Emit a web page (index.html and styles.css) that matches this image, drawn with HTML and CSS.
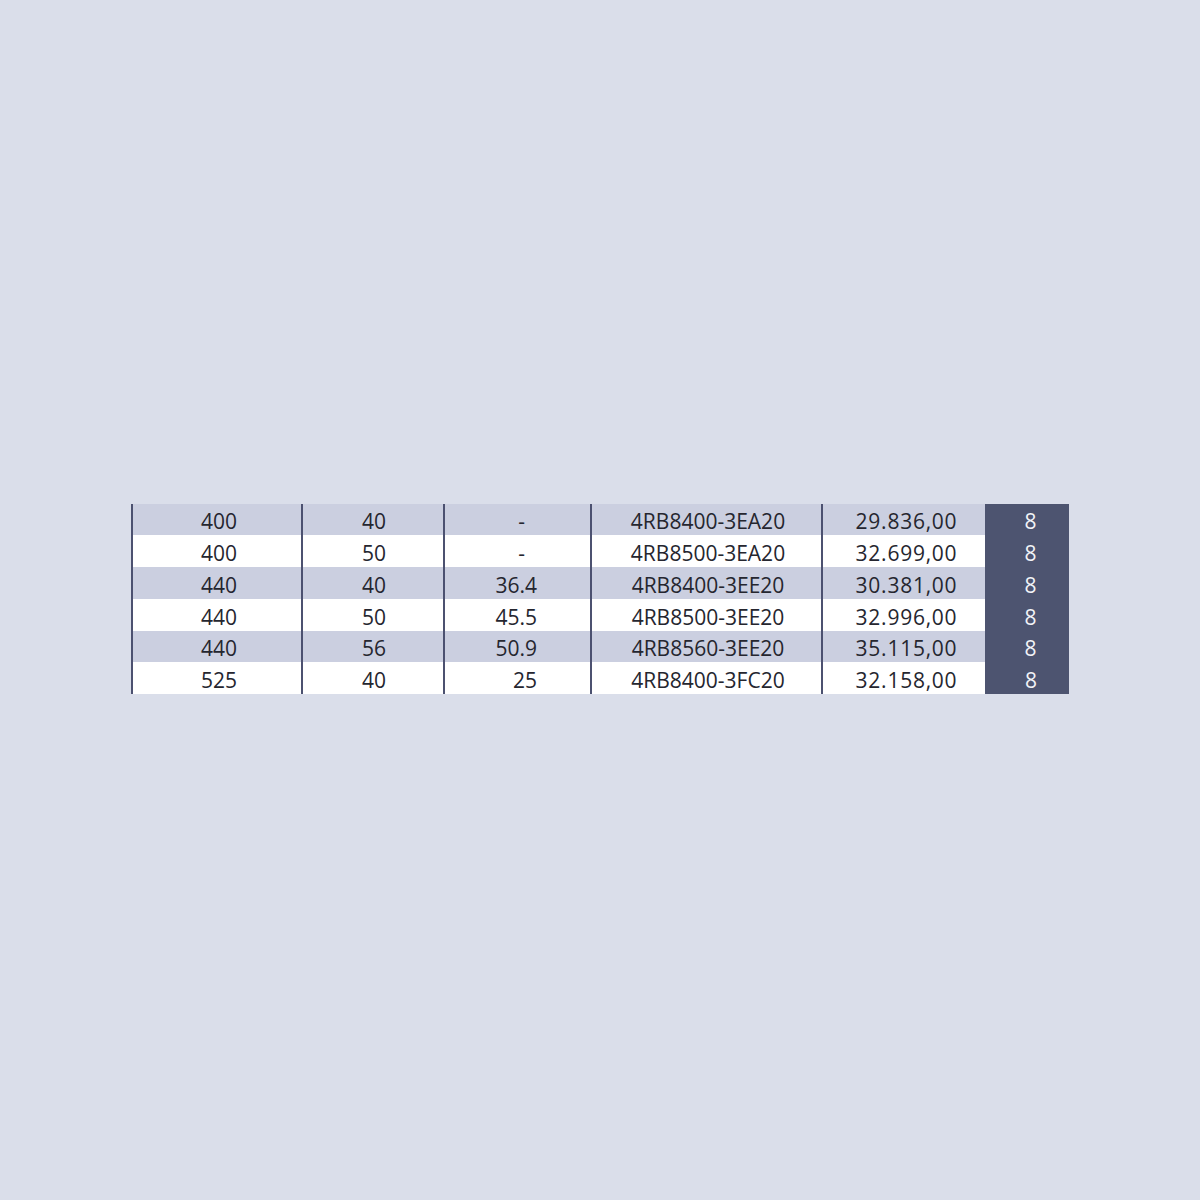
FILE: index.html
```html
<!DOCTYPE html>
<html lang="de">
<head>
<meta charset="utf-8">
<title>Preistabelle</title>
<link rel="stylesheet" href="styles.css">
</head>
<body>
<main class="page">
  <table class="price-table">
    <colgroup>
      <col class="c1"><col class="c2"><col class="c3"><col class="c4"><col class="c5"><col class="c6">
    </colgroup>
    <tbody>
      <tr class="r1">
        <td class="cell a">400</td><td class="cell b">40</td><td class="cell c dash">-</td>
        <td class="cell d">4RB8400-3EA20</td><td class="cell e">29.836,00</td><td class="cell f">8</td>
      </tr>
      <tr class="r2">
        <td class="cell a">400</td><td class="cell b">50</td><td class="cell c dash">-</td>
        <td class="cell d">4RB8500-3EA20</td><td class="cell e">32.699,00</td><td class="cell f">8</td>
      </tr>
      <tr class="r3">
        <td class="cell a">440</td><td class="cell b">40</td><td class="cell c">36.4</td>
        <td class="cell d">4RB8400-3EE20</td><td class="cell e">30.381,00</td><td class="cell f">8</td>
      </tr>
      <tr class="r4">
        <td class="cell a">440</td><td class="cell b">50</td><td class="cell c">45.5</td>
        <td class="cell d">4RB8500-3EE20</td><td class="cell e">32.996,00</td><td class="cell f">8</td>
      </tr>
      <tr class="r5">
        <td class="cell a">440</td><td class="cell b">56</td><td class="cell c">50.9</td>
        <td class="cell d">4RB8560-3EE20</td><td class="cell e">35.115,00</td><td class="cell f">8</td>
      </tr>
      <tr class="r6">
        <td class="cell a">525</td><td class="cell b">40</td><td class="cell c">25</td>
        <td class="cell d">4RB8400-3FC20</td><td class="cell e">32.158,00</td><td class="cell f">8</td>
      </tr>
    </tbody>
  </table>
</main>
</body>
</html>
```
FILE: styles.css
```css
html, body {
  margin: 0;
  padding: 0;
  background: #dadeea;
}
body {
  width: 1200px;
  height: 1200px;
  font-family: "Open Sans", "Noto Sans", sans-serif;
  color: #25262f;
}
.page {
  padding: 504px 0 0 131px;
}
.price-table {
  border-collapse: collapse;
  table-layout: fixed;
  width: 937px;
  font-size: 21px;
}
.c1 { width: 170px; }
.c2 { width: 142px; }
.c3 { width: 147px; }
.c4 { width: 231px; }
.c5 { width: 163px; }
.c6 { width: 84px; }

.price-table tr:nth-child(odd) { background: #cbcfe0; }
.price-table tr:nth-child(even) { background: #ffffff; }
.r1, .r5 { height: 31px; }
.r2, .r3, .r4, .r6 { height: 32px; }

.cell {
  padding: 3px 0 0 0;
  line-height: 28px;
  text-align: center;
  white-space: nowrap;
  vertical-align: middle;
}
.a, .b, .c, .d, .e {
  border-left: 2px solid #4c5170;
}
.a { padding-left: 4px; }
.b { padding-left: 2px; }
.c { text-align: right; padding-right: 53px; }
.c.dash { padding-right: 65px; }
.d { padding-left: 3px; }
.e { padding-left: 5px; letter-spacing: 0.75px; }
.f {
  background: #4d5470;
  color: #f2f3f7;
  padding-left: 8px;
}
```
